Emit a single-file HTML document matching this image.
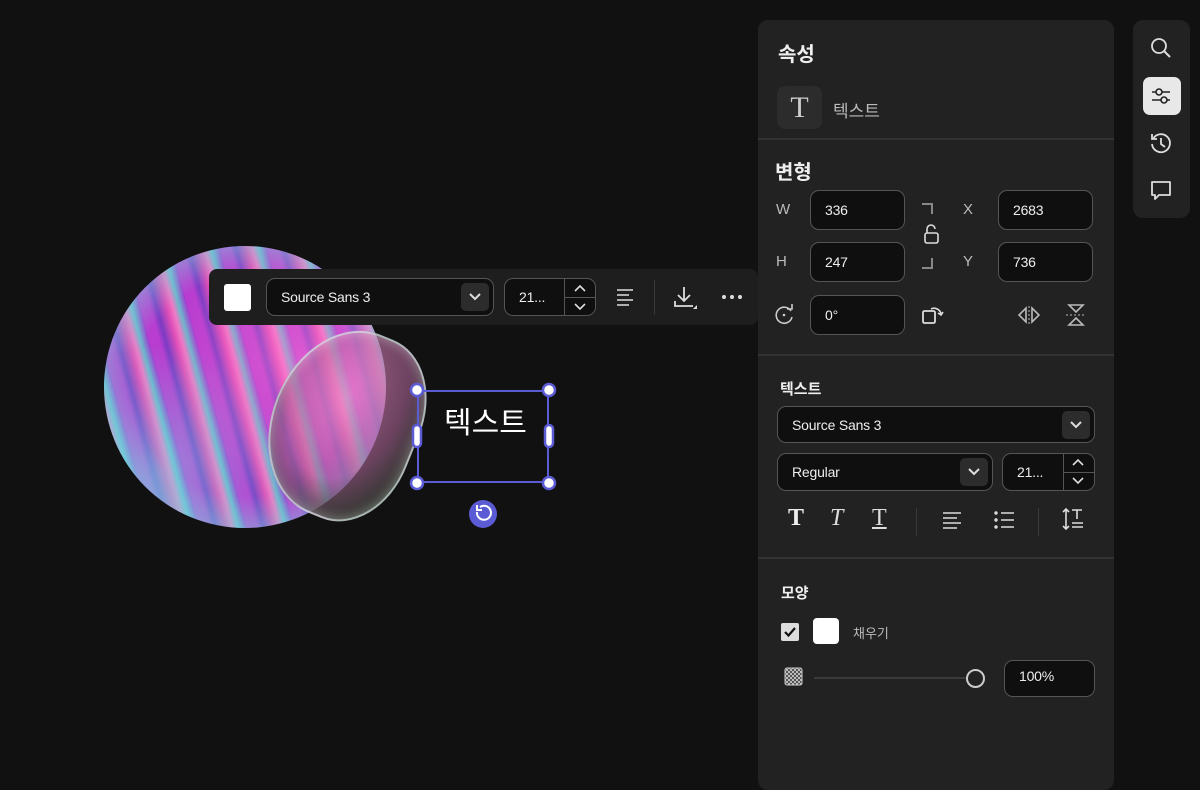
<!DOCTYPE html>
<html><head><meta charset="utf-8"><style>
*{box-sizing:border-box;margin:0;padding:0}
body{width:1200px;height:775px;background:#111;position:relative;overflow:hidden;font-family:"Liberation Sans","Noto Sans CJK KR",sans-serif;color:#e8e8e8}
.abs{position:absolute}
.inp{position:absolute;background:#0f0f0f;border:1px solid #555;border-radius:9px;color:#eee;font-size:14px;padding-left:14px;display:flex;align-items:center;letter-spacing:-0.2px}
.lbl{position:absolute;color:#bbb;font-size:15px}
.dd{position:absolute;width:28px;height:28px;background:#2c2c2c;border-radius:5px;display:flex;align-items:center;justify-content:center}
.hr{position:absolute;left:758px;width:356px;height:2px;background:#333}
.h{position:absolute;font-weight:bold;color:#eee}
</style></head><body>
<!-- sphere -->
<div class="abs" style="left:104px;top:246px;width:282px;height:282px;border-radius:50%;overflow:hidden;background:
radial-gradient(circle at 50% 50%,transparent 55%,rgba(120,210,220,.55) 75%,rgba(200,230,230,.7) 100%),
repeating-linear-gradient(75deg,#b83dd0 0 10px,#7a3bc4 16px,#e04fb7 26px,#f07ac5 32px,#6ab9cc 38px,#a23ad0 46px);"></div>
<div class="abs" style="left:104px;top:246px;width:282px;height:282px;border-radius:50%;background:radial-gradient(circle at 70% 40%,rgba(255,120,210,.5),transparent 50%),radial-gradient(circle at 20% 80%,rgba(120,220,230,.45),transparent 40%)"></div>
<div class="abs" style="left:272px;top:328px;width:146px;height:192px;border-radius:55% 45% 45% 55%;transform:rotate(22deg);background:radial-gradient(ellipse at 45% 35%,rgba(240,140,200,.65),rgba(170,100,150,.6) 50%,rgba(40,55,40,.95) 85%);border:2px solid rgba(220,235,235,.7);box-shadow:inset 0 0 12px rgba(255,255,255,.4)"></div>
<!-- toolbar -->
<div class="abs" style="left:209px;top:269px;width:549px;height:56px;background:#1e1e1e;border-radius:8px"></div>
<div class="abs" style="left:224px;top:284px;width:27px;height:27px;background:#fff;border-radius:3px"></div>
<div class="inp" style="left:266px;top:278px;width:228px;height:38px">Source Sans 3</div>
<div class="dd" style="left:461px;top:283px"><svg width="14" height="10"><path d="M2 2l5 5 5-5" stroke="#ddd" stroke-width="2" fill="none"/></svg></div>
<div class="inp" style="left:504px;top:278px;width:92px;height:38px">21...</div>
<div class="abs" style="left:564px;top:279px;width:1px;height:36px;background:#555"></div>
<div class="abs" style="left:565px;top:297px;width:30px;height:1px;background:#555"></div>
<svg class="abs" style="left:572px;top:282px" width="16" height="32"><path d="M3 9l5-5 5 5M3 22l5 5 5-5" stroke="#ddd" stroke-width="1.6" fill="none"/></svg>
<svg class="abs" style="left:615px;top:287px" width="20" height="20"><path d="M2 3h16M2 8h12M2 13h16M2 18h12" stroke="#ddd" stroke-width="1.6"/></svg>
<div class="abs" style="left:654px;top:280px;width:1px;height:34px;background:#3a3a3a"></div>
<svg class="abs" style="left:673px;top:285px" width="26" height="26"><path d="M11 2v14M5 10l6 6 6-6M2 16v5h18" stroke="#ddd" stroke-width="1.8" fill="none"/><path d="M24 20l-4 4h4z" fill="#ddd"/></svg>
<svg class="abs" style="left:721px;top:294px" width="22" height="6"><circle cx="3" cy="3" r="2" fill="#ddd"/><circle cx="11" cy="3" r="2" fill="#ddd"/><circle cx="19" cy="3" r="2" fill="#ddd"/></svg>
<!-- selection -->
<div class="abs" style="left:417px;top:390px;width:132px;height:93px;border:2px solid #5b5bd6"></div>
<div class="abs" style="left:444px;top:398px;font-size:30px;color:#fff">텍스트</div>
<svg class="abs" style="left:405px;top:378px" width="160" height="160">
<g fill="#fff" stroke="#5b5bd6" stroke-width="2.5"><circle cx="12" cy="12" r="6"/><circle cx="144" cy="12" r="6"/><circle cx="12" cy="105" r="6"/><circle cx="144" cy="105" r="6"/><rect x="8" y="47" width="8" height="22" rx="4"/><rect x="140" y="47" width="8" height="22" rx="4"/></g>
<circle cx="78" cy="136" r="14" fill="#5b5bd6"/><path d="M72 134a7 7 0 1 0 3-5" stroke="#fff" stroke-width="2" fill="none"/><path d="M72 127v5h5" stroke="#fff" stroke-width="2" fill="none"/></svg>
<!-- panel -->
<div class="abs" style="left:758px;top:20px;width:356px;height:770px;background:#222;border-radius:10px"></div>
<div class="h" style="left:778px;top:38px;font-size:20px">속성</div>
<div class="abs" style="left:777px;top:86px;width:45px;height:43px;background:#2c2c2c;border-radius:8px;font-family:'Liberation Serif',serif;font-size:30px;color:#ccc;text-align:center;line-height:43px">T</div>
<div class="abs" style="left:833px;top:97px;font-size:17px;color:#bbb">텍스트</div>
<div class="hr" style="top:138px"></div>
<div class="h" style="left:775px;top:156px;font-size:20px">변형</div>
<div class="lbl" style="left:776px;top:201px">W</div><div class="lbl" style="left:776px;top:253px">H</div>
<div class="lbl" style="left:963px;top:201px">X</div><div class="lbl" style="left:963px;top:253px">Y</div>
<div class="inp" style="left:810px;top:190px;width:95px;height:40px">336</div>
<div class="inp" style="left:810px;top:242px;width:95px;height:40px">247</div>
<div class="inp" style="left:998px;top:190px;width:95px;height:40px">2683</div>
<div class="inp" style="left:998px;top:242px;width:95px;height:40px">736</div>
<div class="inp" style="left:810px;top:295px;width:95px;height:40px">0°</div>
<svg class="abs" style="left:918px;top:200px" width="24" height="72"><path d="M4 4h10v10M4 68h10v-10" stroke="#888" stroke-width="2" fill="none"/><rect x="7" y="33" width="13" height="10" rx="2" stroke="#ddd" stroke-width="1.6" fill="none"/><path d="M9 33v-4a4 4 0 0 1 8 0" stroke="#ddd" stroke-width="1.6" fill="none"/></svg>
<svg class="abs" style="left:773px;top:303px" width="24" height="24"><path d="M18 8a8 8 0 1 0 1 6" stroke="#ccc" stroke-width="1.6" fill="none"/><path d="M14 6h5V1" stroke="#ccc" stroke-width="1.6" fill="none"/><circle cx="11" cy="12" r="1.3" fill="#ccc"/></svg>
<svg class="abs" style="left:921px;top:303px" width="24" height="24"><rect x="2" y="8" width="12" height="12" rx="1.5" stroke="#ddd" stroke-width="1.8" fill="none"/><path d="M10 6a7 7 0 0 1 10 5M17 10l3 2 2-3" stroke="#ddd" stroke-width="1.6" fill="none"/></svg>
<svg class="abs" style="left:1017px;top:303px" width="24" height="24"><path d="M9 5v14L2 12zM15 5v14l7-7z" stroke="#bbb" stroke-width="1.6" fill="none"/><path d="M12 3v18" stroke="#bbb" stroke-dasharray="2 2"/></svg>
<svg class="abs" style="left:1064px;top:303px" width="24" height="24"><path d="M5 2h14L12 9zM5 22h14l-7-7z" stroke="#bbb" stroke-width="1.6" fill="none"/><path d="M2 12h20" stroke="#bbb" stroke-dasharray="2 2"/></svg>
<div class="hr" style="top:354px"></div>
<div class="h" style="left:780px;top:378px;font-size:15px">텍스트</div>
<div class="inp" style="left:777px;top:406px;width:318px;height:37px">Source Sans 3</div>
<div class="dd" style="left:1062px;top:411px"><svg width="14" height="10"><path d="M2 2l5 5 5-5" stroke="#ddd" stroke-width="2" fill="none"/></svg></div>
<div class="inp" style="left:777px;top:453px;width:216px;height:38px">Regular</div>
<div class="dd" style="left:960px;top:458px"><svg width="14" height="10"><path d="M2 2l5 5 5-5" stroke="#ddd" stroke-width="2" fill="none"/></svg></div>
<div class="inp" style="left:1002px;top:453px;width:93px;height:38px">21...</div>
<div class="abs" style="left:1063px;top:454px;width:1px;height:36px;background:#555"></div>
<div class="abs" style="left:1064px;top:472px;width:30px;height:1px;background:#555"></div>
<svg class="abs" style="left:1070px;top:456px" width="16" height="32"><path d="M3 9l5-5 5 5M3 22l5 5 5-5" stroke="#ddd" stroke-width="1.6" fill="none"/></svg>
<div class="abs" style="left:788px;top:505px;font-family:'Liberation Serif',serif;font-weight:bold;font-size:24px;color:#eee">T</div>
<div class="abs" style="left:830px;top:505px;font-family:'Liberation Serif',serif;font-style:italic;font-size:24px;color:#ddd">T</div>
<div class="abs" style="left:872px;top:505px;font-family:'Liberation Serif',serif;font-size:24px;color:#ddd;text-decoration:underline">T</div>
<div class="abs" style="left:916px;top:508px;width:1px;height:28px;background:#3a3a3a"></div>
<svg class="abs" style="left:942px;top:510px" width="20" height="20"><path d="M1 3h18M1 8h14M1 13h18M1 18h14" stroke="#ddd" stroke-width="1.6"/></svg>
<svg class="abs" style="left:993px;top:509px" width="22" height="22"><circle cx="3" cy="4" r="1.7" fill="#ddd"/><circle cx="3" cy="11" r="1.7" fill="#ddd"/><circle cx="3" cy="18" r="1.7" fill="#ddd"/><path d="M8 4h13M8 11h13M8 18h13" stroke="#ddd" stroke-width="1.6"/></svg>
<div class="abs" style="left:1038px;top:508px;width:1px;height:28px;background:#3a3a3a"></div>
<svg class="abs" style="left:1061px;top:507px" width="24" height="24"><path d="M5 2v20M2 5l3-3 3 3M2 19l3 3 3-3" stroke="#ddd" stroke-width="1.6" fill="none"/><path d="M11 3h10M16 3v9M11 16h11M11 20h11" stroke="#ddd" stroke-width="1.6"/></svg>
<div class="hr" style="top:557px"></div>
<div class="h" style="left:781px;top:582px;font-size:15px">모양</div>
<div class="abs" style="left:781px;top:623px;width:18px;height:18px;background:#ddd;border-radius:2px"><svg width="18" height="18"><path d="M4 9l3.5 3.5L14 5" stroke="#111" stroke-width="2.2" fill="none"/></svg></div>
<div class="abs" style="left:813px;top:618px;width:26px;height:26px;background:#fff;border-radius:4px"></div>
<div class="abs" style="left:853px;top:623px;font-size:13px;color:#bbb">채우기</div>
<svg class="abs" style="left:784px;top:667px" width="19" height="19"><defs><pattern id="p" width="4" height="4" patternUnits="userSpaceOnUse"><rect width="4" height="4" fill="#555"/><rect width="2" height="2" fill="#bbb"/><rect x="2" y="2" width="2" height="2" fill="#bbb"/></pattern></defs><rect x="1" y="1" width="17" height="17" rx="2" fill="url(#p)" stroke="#ccc"/></svg>
<div class="abs" style="left:814px;top:677px;width:152px;height:2px;background:#3a3a3a"></div>
<div class="abs" style="left:966px;top:669px;width:19px;height:19px;border:2px solid #ccc;border-radius:50%"></div>
<div class="inp" style="left:1004px;top:660px;width:91px;height:37px;align-items:flex-start;padding-top:7px">100%</div>
<!-- rail -->
<div class="abs" style="left:1133px;top:20px;width:57px;height:198px;background:#222;border-radius:10px"></div>
<svg class="abs" style="left:1149px;top:36px" width="24" height="24"><circle cx="10" cy="10" r="7" stroke="#ddd" stroke-width="1.8" fill="none"/><path d="M15 15l6 6" stroke="#ddd" stroke-width="2"/></svg>
<div class="abs" style="left:1143px;top:77px;width:38px;height:38px;background:#e8e8e8;border-radius:7px"></div>
<svg class="abs" style="left:1149px;top:83px" width="26" height="26"><path d="M3 9h18M3 17h18" stroke="#222" stroke-width="1.6"/><circle cx="10" cy="9" r="3" fill="#e8e8e8" stroke="#222" stroke-width="1.6"/><circle cx="15" cy="17" r="3" fill="#e8e8e8" stroke="#222" stroke-width="1.6"/></svg>
<svg class="abs" style="left:1149px;top:131px" width="24" height="24"><path d="M4 8a9 9 0 1 1-1 5" stroke="#ddd" stroke-width="1.8" fill="none"/><path d="M3 3v5h5" stroke="#ddd" stroke-width="1.8" fill="none"/><path d="M12 7v6l4 3" stroke="#ddd" stroke-width="1.8" fill="none"/></svg>
<svg class="abs" style="left:1149px;top:179px" width="24" height="24"><path d="M3 3h18v13H10l-4 4v-4H3z" stroke="#ddd" stroke-width="1.8" fill="none" stroke-linejoin="round"/></svg>
</body></html>
